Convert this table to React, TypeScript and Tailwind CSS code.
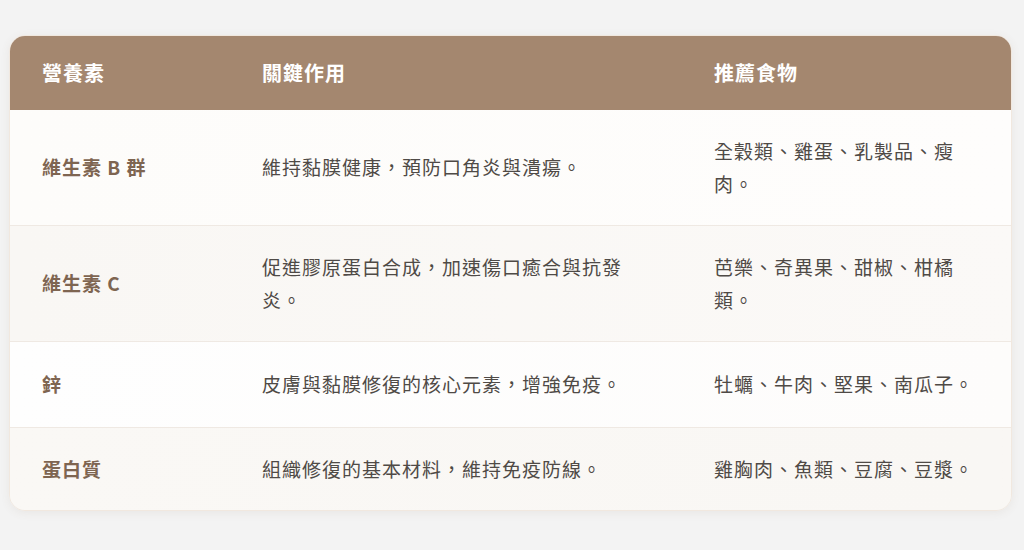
import React from "react";

const rows = [
  { n: "維生素 B 群", e: "維持黏膜健康，預防口角炎與潰瘍。", f: "全穀類、雞蛋、乳製品、瘦肉。", bg: "bg-gradient-to-r from-[#fdfcfa] to-[#fefdfc]", py: "py-[25px]" },
  { n: "維生素 C", e: "促進膠原蛋白合成，加速傷口癒合與抗發炎。", f: "芭樂、奇異果、甜椒、柑橘類。", bg: "bg-gradient-to-r from-[#f9f7f4] to-[#fbf9f7]", py: "py-[25px]" },
  { n: "鋅", e: "皮膚與黏膜修復的核心元素，增強免疫。", f: "牡蠣、牛肉、堅果、南瓜子。", bg: "bg-gradient-to-r from-[#fefefe] to-[#fdfcfb]", py: "py-[26px]" },
  { n: "蛋白質", e: "組織修復的基本材料，維持免疫防線。", f: "雞胸肉、魚類、豆腐、豆漿。", bg: "bg-gradient-to-r from-[#faf8f5] to-[#f9f7f4]", py: "py-[25px]" },
];

export default function App() {
  return (
    <div
      className="w-[1024px] h-[550px] bg-[#f3f3f3] pl-[9px] pr-[12px] pt-[35px]"
      style={{ fontFamily: '"Noto Sans CJK TC", sans-serif' }}
    >
      <div className="rounded-[16px] overflow-hidden shadow-[0_2px_10px_rgba(120,90,60,0.08)] border border-[#f1e8df]">
        <div className="grid grid-cols-[220px_452px_1fr] h-[74px] items-center bg-[#a4876f] text-white font-bold text-[20px] tracking-[1px]">
          <div className="pl-[32px]">營養素</div>
          <div className="pl-[32px]">關鍵作用</div>
          <div className="pl-[32px]">推薦食物</div>
        </div>
        {rows.map((r, i) => (
          <div
            key={i}
            className={`grid grid-cols-[220px_452px_1fr] items-center text-[19px] leading-[32.5px] tracking-[1px] ${r.bg} ${r.py} ${i < rows.length - 1 ? "border-b border-[#efe9e3]" : ""}`}
          >
            <div className="pl-[32px] font-bold text-[#7e6551]">{r.n}</div>
            <div className="pl-[32px] pr-[34px] text-[#4f4a46]">{r.e}</div>
            <div className="pl-[32px] pr-[32px] text-[#4f4a46]">{r.f}</div>
          </div>
        ))}
      </div>
    </div>
  );
}
